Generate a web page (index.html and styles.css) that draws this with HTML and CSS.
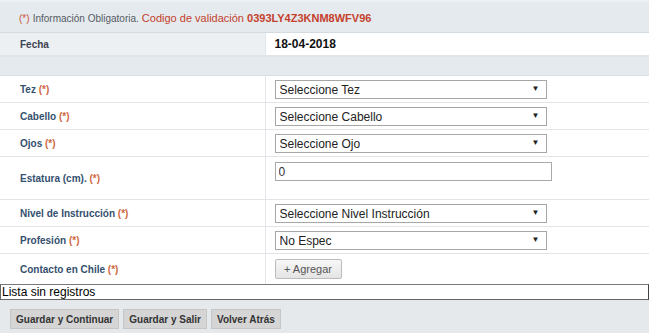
FILE: index.html
```html
<!DOCTYPE html>
<html lang="es">
<head>
<meta charset="utf-8">
<link rel="stylesheet" href="styles.css">
</head>
<body>
<div class="page">
  <div class="notice">
    <span class="req">(*)</span> <span class="info">Información Obligatoria.</span>
    <span class="code-label">Codigo de validación</span> <span class="code">0393LY4Z3KNM8WFV96</span>
  </div>
  <table class="form">
    <tr class="row-date">
      <td class="label lbl-gray">Fecha</td>
      <td class="value date">18-04-2018</td>
    </tr>
    <tr class="spacer"><td colspan="2"></td></tr>
    <tr class="row">
      <td class="label">Tez <span class="req">(*)</span></td>
      <td class="value"><div class="sel"><select><option>Seleccione Tez</option></select><span class="arrow">▼</span></div></td>
    </tr>
    <tr class="row">
      <td class="label">Cabello <span class="req">(*)</span></td>
      <td class="value"><div class="sel"><select><option>Seleccione Cabello</option></select><span class="arrow">▼</span></div></td>
    </tr>
    <tr class="row">
      <td class="label">Ojos <span class="req">(*)</span></td>
      <td class="value"><div class="sel"><select><option>Seleccione Ojo</option></select><span class="arrow">▼</span></div></td>
    </tr>
    <tr class="row tall">
      <td class="label">Estatura (cm). <span class="req">(*)</span></td>
      <td class="value top"><input class="txt" type="text" value="0"></td>
    </tr>
    <tr class="row">
      <td class="label">Nivel de Instrucción <span class="req">(*)</span></td>
      <td class="value"><div class="sel"><select><option>Seleccione Nivel Instrucción</option></select><span class="arrow">▼</span></div></td>
    </tr>
    <tr class="row">
      <td class="label">Profesión <span class="req">(*)</span></td>
      <td class="value"><div class="sel"><select><option>No Espec</option></select><span class="arrow">▼</span></div></td>
    </tr>
    <tr class="row last">
      <td class="label">Contacto en Chile <span class="req">(*)</span></td>
      <td class="value"><button class="add" type="button">+ Agregar</button></td>
    </tr>
  </table>
  <div class="list">Lista sin registros</div>
  <div class="actions">
    <button class="btn" type="button">Guardar y Continuar</button>
    <button class="btn" type="button">Guardar y Salir</button>
    <button class="btn" type="button">Volver Atrás</button>
  </div>
</div>
</body>
</html>
```
FILE: styles.css
```css
html, body {
  margin: 0;
  padding: 0;
  background: #ffffff;
}
.page {
  width: 649px;
  font-family: "Liberation Sans", Arial, sans-serif;
}
.notice {
  box-sizing: border-box;
  height: 33px;
  background: #e5eaee;
  border-top: 2px solid #eef1f4;
  border-bottom: 1px solid #d3dbe1;
  padding: 9px 0 0 19px;
  font-size: 11px;
  line-height: 14px;
}
.notice .req { color: #c9553a; font-size: 10px; }
.notice .info { color: #555c63; font-size: 10px; }
.notice .code-label { color: #c4412c; font-size: 11px; }
.notice .code { color: #c4412c; font-weight: bold; font-size: 11px; }

.form {
  width: 649px;
  border-collapse: collapse;
  table-layout: fixed;
}
.form td {
  padding: 0;
}
.label {
  width: 265px;
  box-sizing: border-box;
  padding-left: 20px !important;
  font-size: 10px;
  font-weight: bold;
  color: #34506e;
  border-right: 1px solid #e2e6ea;
  vertical-align: middle;
}
.lbl-gray {
  background: #edf0f3;
  color: #3b4450;
}
.label .req { color: #d0683f; }
.value {
  padding-left: 9px !important;
  vertical-align: middle;
}
.row-date td {
  height: 22px;
  border-bottom: 2px solid #dfe4e8;
}
.date {
  font-size: 12px;
  font-weight: bold;
  color: #111;
  background: #fff;
}
.spacer td {
  height: 18px;
  background: #e5eaee;
  border-bottom: 1px solid #d8dfe4;
}
.row td {
  height: 26px;
  border-bottom: 1px solid #e1e5e9;
}
.row.tall .label { height: 42px; }
.row.tall .value {
  height: 37px;
  vertical-align: top;
  padding-top: 5px !important;
}
.row.last td { height: 30px; border-bottom: none; }

.sel {
  position: relative;
  width: 272px;
  height: 19px;
}
.sel select {
  appearance: none;
  -webkit-appearance: none;
  width: 272px;
  height: 19px;
  box-sizing: border-box;
  border: 1px solid #a6a6a6;
  background: #fff;
  font-family: "Liberation Sans", Arial, sans-serif;
  font-size: 12px;
  color: #222;
  padding: 0 0 0 4px;
  margin: 0;
  border-radius: 0;
  outline: none;
}
.sel .arrow {
  position: absolute;
  right: 7px;
  top: 5px;
  font-size: 8px;
  line-height: 8px;
  color: #222;
  pointer-events: none;
}
.txt {
  width: 277px;
  height: 19px;
  box-sizing: border-box;
  border: 1px solid #a9a9a9;
  font-family: "Liberation Sans", Arial, sans-serif;
  font-size: 12px;
  color: #333;
  padding: 0 3px;
  margin: 0;
  display: block;
}
.add {
  height: 20px;
  width: 67px;
  box-sizing: border-box;
  border: 1px solid #bcbcbc;
  border-radius: 2px;
  background: linear-gradient(#f7f7f7, #e4e4e4);
  font-family: "Liberation Sans", Arial, sans-serif;
  font-size: 11px;
  color: #555;
  padding: 0;
  margin: 0;
  display: block;
}
.list {
  box-sizing: border-box;
  height: 16px;
  border: 1px solid #666;
  border-top-color: #777;
  border-right-color: #444;
  background: #fff;
  font-size: 12px;
  line-height: 14px;
  color: #000;
  padding-left: 1px;
}
.actions {
  background: #e5e9ec;
  height: 33px;
  box-sizing: border-box;
  padding: 9px 0 0 10px;
  display: flex;
  gap: 4px;
}
.btn {
  height: 20px;
  box-sizing: border-box;
  border: 1px solid #c6c6c6;
  background: #d5d5d5;
  font-family: "Liberation Sans", Arial, sans-serif;
  font-size: 10px;
  font-weight: bold;
  color: #333;
  padding: 0 5px;
  margin: 0;
  border-radius: 0;
}
```
